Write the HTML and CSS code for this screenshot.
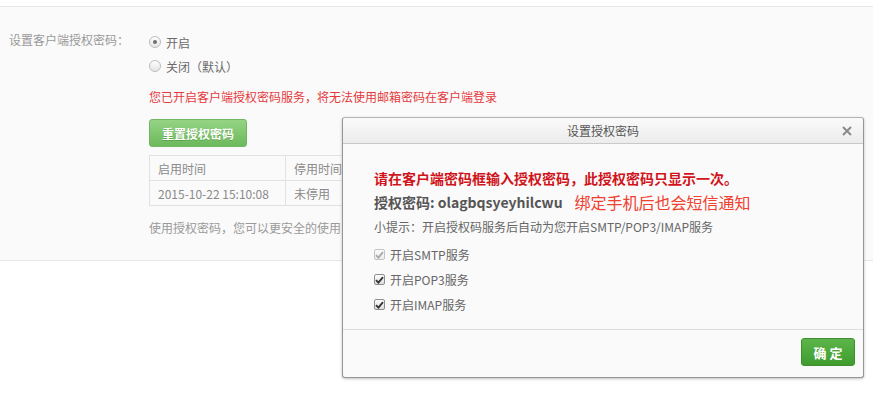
FILE: index.html
```html
<!DOCTYPE html>
<html lang="zh-CN">
<head>
<meta charset="utf-8">
<title>设置授权密码</title>
<link rel="stylesheet" href="styles.css">
</head>
<body>
<div class="page">
  <div class="setting">
    <div class="label">设置客户端授权密码：</div>
    <div class="options">
      <div class="radio-row"><span class="radio checked"></span><span>开启</span></div>
      <div class="radio-row"><span class="radio"></span><span>关闭（默认）</span></div>
      <p class="warn">您已开启客户端授权密码服务，将无法使用邮箱密码在客户端登录</p>
      <button class="btn-reset">重置授权密码</button>
      <table class="log">
        <tr><td class="c1">启用时间</td><td class="c2">停用时间</td></tr>
        <tr><td class="c1">2015-10-22 15:10:08</td><td class="c2">未停用</td></tr>
      </table>
      <p class="note">使用授权密码，您可以更安全的使用</p>
    </div>
  </div>
</div>

<div class="dialog">
  <div class="dlg-head">
    <span class="dlg-title">设置授权密码</span>
    <span class="dlg-close"><svg width="10" height="10" viewBox="0 0 10 10"><path d="M1 1L9 9M9 1L1 9" stroke="#8a8a8a" stroke-width="2" fill="none"/></svg></span>
  </div>
  <div class="dlg-body">
    <p class="alert">请在客户端密码框输入授权密码，此授权密码只显示一次。</p>
    <p class="code">授权密码: olagbqsyeyhilcwu<span class="remark">绑定手机后也会短信通知</span></p>
    <p class="hint">小提示：开启授权码服务后自动为您开启SMTP/POP3/IMAP服务</p>
    <div class="chk-row disabled"><span class="chk"><svg width="9" height="8" viewBox="0 0 9 8"><path d="M1 4.2L3.4 6.6L8 1.2" stroke="currentColor" stroke-width="1.8" fill="none"/></svg></span><span>开启SMTP服务</span></div>
    <div class="chk-row"><span class="chk"><svg width="9" height="8" viewBox="0 0 9 8"><path d="M1 4.2L3.4 6.6L8 1.2" stroke="currentColor" stroke-width="1.8" fill="none"/></svg></span><span>开启POP3服务</span></div>
    <div class="chk-row"><span class="chk"><svg width="9" height="8" viewBox="0 0 9 8"><path d="M1 4.2L3.4 6.6L8 1.2" stroke="currentColor" stroke-width="1.8" fill="none"/></svg></span><span>开启IMAP服务</span></div>
  </div>
  <div class="dlg-foot">
    <button class="btn-ok">确 定</button>
  </div>
</div>
</body>
</html>
```

FILE: styles.css
```css
* { box-sizing: border-box; }
html, body { margin: 0; padding: 0; background: #fff; }
body {
  font-family: "Noto Sans CJK SC", "Noto Sans", sans-serif;
  font-size: 12px;
  color: #666;
  position: relative;
  width: 873px;
  height: 397px;
  overflow: hidden;
}
p { margin: 0; }

.page {
  margin-top: 6px;
  border-top: 1px solid #e6e6e6;
  border-bottom: 1px solid #e6e6e6;
  background: #fafafa;
  padding: 23px 0 22px;
}
.setting { display: flex; }
.label {
  width: 149px;
  padding-left: 9px;
  line-height: 20px;
  color: #999;
  white-space: nowrap;
}
.options { display: flex; flex-direction: column; align-items: flex-start; }
.radio-row {
  display: flex;
  align-items: center;
  height: 24px;
  color: #6a6a6a;
}
.radio {
  width: 12px; height: 12px;
  border-radius: 50%;
  border: 1px solid #bdbdbd;
  background: linear-gradient(#fdfdfd, #e4e4e4);
  margin-right: 5px;
  display: flex; align-items: center; justify-content: center;
}
.radio.checked::after {
  content: "";
  width: 4px; height: 4px; border-radius: 50%;
  background: #6f6f6f;
}
.warn {
  margin-top: 9px;
  line-height: 20px;
  color: #e4393c;
  white-space: nowrap;
}
.btn-reset {
  margin-top: 12px;
  width: 98px; height: 28px;
  border: 1px solid #72b562;
  border-radius: 3px;
  background: linear-gradient(#95d485, #6cb95b);
  color: #fff;
  font-family: inherit;
  font-size: 12px;
  font-weight: bold;
  padding: 0;
  text-shadow: 0 1px 0 rgba(60,120,40,.4);
}
.log {
  margin-top: 8px;
  border-collapse: collapse;
  color: #8a8a8a;
}
.log td {
  border: 1px solid #e1e1e1;
  height: 25px;
  padding: 0 0 0 8px;
  white-space: nowrap;
}
.log .c1 { width: 136px; }
.log .c2 { width: 200px; }
.note {
  margin-top: 12px;
  line-height: 20px;
  color: #999;
  white-space: nowrap;
}

.dialog {
  position: absolute;
  left: 342px;
  top: 117px;
  width: 522px;
  height: 261px;
  border: 1px solid #959595;
  border-top-color: #b5b5b5;
  border-radius: 3px;
  background: #fafafa;
  box-shadow: 0 1px 3px rgba(0,0,0,.25);
  display: flex;
  flex-direction: column;
}
.dlg-head {
  height: 26px;
  border-bottom: 1px solid #c9c9c9;
  background: linear-gradient(#fafafa, #ececec);
  border-radius: 3px 3px 0 0;
  display: flex;
  align-items: center;
  justify-content: center;
  position: relative;
  color: #555;
}
.dlg-close {
  position: absolute;
  right: 11px;
  top: 8px;
  display: flex;
}
.dlg-body {
  flex: 1;
  padding: 22px 0 0 31px;
}
.alert {
  line-height: 24px;
  font-size: 14px;
  font-weight: bold;
  color: #d0141b;
  white-space: nowrap;
}
.code {
  line-height: 24px;
  height: 24px;
  font-size: 14px;
  font-weight: bold;
  color: #555;
  white-space: nowrap;
  display: flex;
  align-items: center;
}
.remark {
  margin-left: 12px;
  font-size: 16px;
  font-weight: normal;
  color: #f0402f;
}
.hint {
  margin-top: 2px;
  margin-bottom: 4px;
  line-height: 22px;
  color: #666;
  white-space: nowrap;
}
.chk-row {
  display: flex;
  align-items: center;
  height: 25px;
  color: #666;
}
.chk {
  width: 11px; height: 11px;
  border: 1px solid #8e8e8e;
  border-radius: 2px;
  background: linear-gradient(#fdfdfd, #dedede);
  margin-right: 5px;
  display: flex; align-items: center; justify-content: center;
  color: #333;
}
.chk-row.disabled .chk { border-color: #c4c4c4; color: #a8a8a8; background: linear-gradient(#fbfbfb, #ececec); }
.dlg-foot {
  height: 48px;
  border-top: 1px solid #dedede;
  display: flex;
  justify-content: flex-end;
  padding: 8px 8px 0 0;
}
.btn-ok {
  width: 54px; height: 28px;
  border: 1px solid #3d8f2b;
  border-radius: 3px;
  background: linear-gradient(#5cb54a, #3f9c2d);
  color: #fff;
  font-family: inherit;
  font-size: 13px;
  font-weight: bold;
  padding: 0;
}
```
